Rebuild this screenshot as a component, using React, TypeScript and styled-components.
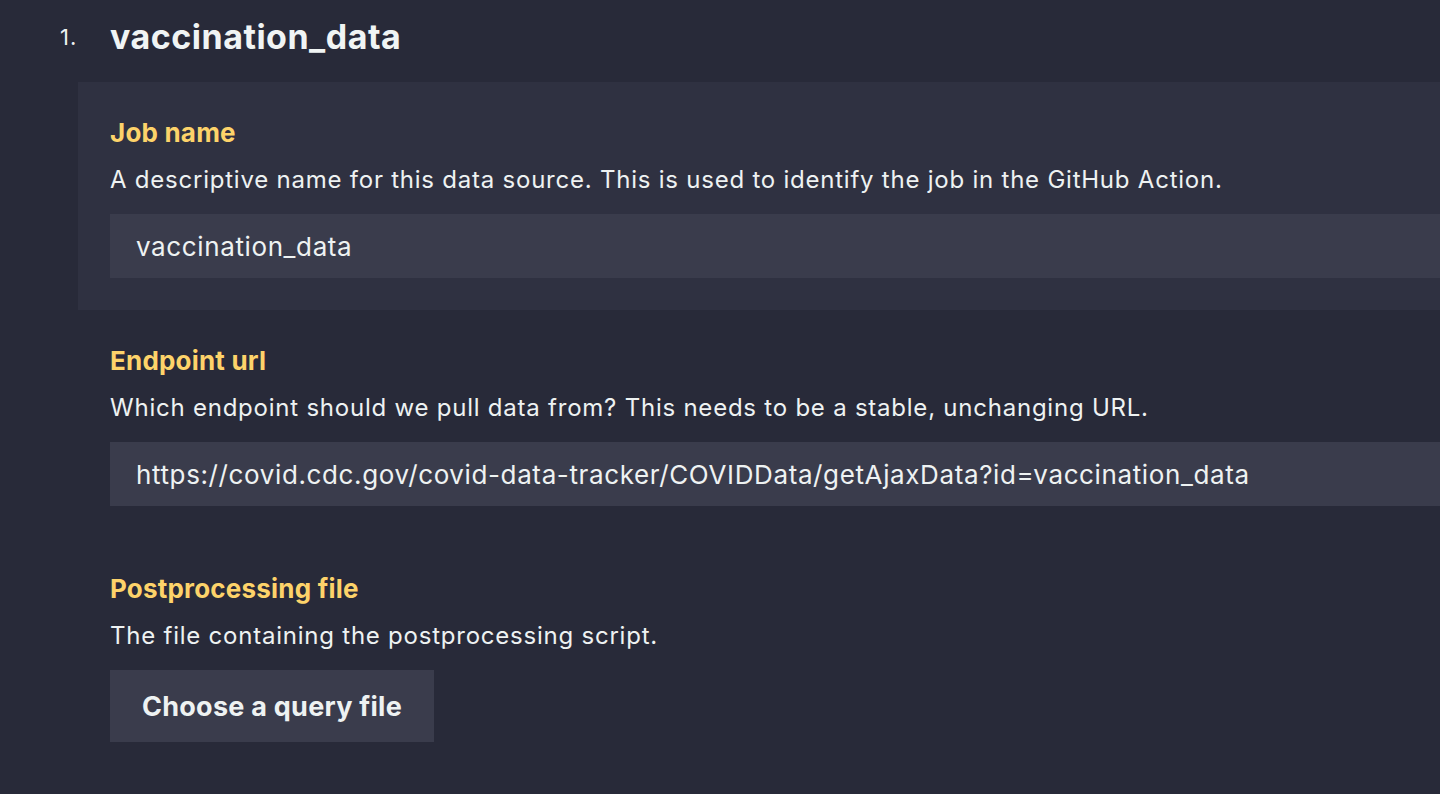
import React from "react";
import styled, { createGlobalStyle } from "styled-components";

const Global = createGlobalStyle`
  html, body {
    margin: 0;
    padding: 0;
    background: #282a39;
    overflow: hidden;
  }
  body {
    font-family: Inter, "Noto Sans", sans-serif;
    color: #eef2f2;
    -webkit-font-smoothing: antialiased;
  }
`;

const Page = styled.div`
  width: 1440px;
  height: 794px;
  overflow: hidden;
  background: #282a39;
`;

const ItemHeader = styled.div`
  display: flex;
  align-items: center;
  height: 50px;
  margin-top: 12px;
  margin-bottom: 20px;
`;

const Index = styled.span`
  width: 50px;
  margin-left: 60px;
  font-size: 22px;
  line-height: 50px;
  letter-spacing: 1px;
  color: #eef2f2;
`;

const Title = styled.h2`
  margin: 0;
  font-size: 34px;
  line-height: 50px;
  font-weight: 700;
  letter-spacing: 0.5px;
  color: #f0f4f4;
`;

const Fields = styled.div`
  margin-left: 78px;
  width: 1500px;
  display: flex;
  flex-direction: column;
`;

const Field = styled.div<{ $active?: boolean }>`
  padding: 32px;
  background: ${(p) => (p.$active ? "#2f3141" : "transparent")};
  display: flex;
  flex-direction: column;
`;

const Label = styled.label`
  font-size: 26px;
  line-height: 38px;
  font-weight: 700;
  letter-spacing: 0.2px;
  color: #fdd36a;
`;

const Description = styled.p`
  margin: 12px 0 0;
  font-size: 24px;
  line-height: 32px;
  letter-spacing: 0.77px;
  color: #eef2f2;
`;

const Input = styled.input`
  margin-top: 18px;
  height: 64px;
  box-sizing: border-box;
  border: none;
  outline: none;
  background: #3a3c4c;
  padding: 0 26px;
  font-family: Inter, "Noto Sans", sans-serif;
  font-size: 26px;
  letter-spacing: 0.62px;
  color: #eef2f2;
`;

const FileButton = styled.button`
  margin-top: 18px;
  align-self: flex-start;
  height: 72px;
  padding: 0 32px;
  border: none;
  background: #3a3c4c;
  font-family: Inter, "Noto Sans", sans-serif;
  font-size: 27px;
  font-weight: 700;
  letter-spacing: 0.25px;
  color: #eef2f2;
  cursor: pointer;
`;

export default function App() {
  return (
    <Page>
      <Global />
      <ItemHeader>
        <Index>1.</Index>
        <Title>vaccination_data</Title>
      </ItemHeader>
      <Fields>
        <Field $active>
          <Label>Job name</Label>
          <Description>
            A descriptive name for this data source. This is used to identify the job in the GitHub Action.
          </Description>
          <Input defaultValue="vaccination_data" />
        </Field>
        <Field>
          <Label>Endpoint url</Label>
          <Description>
            Which endpoint should we pull data from? This needs to be a stable, unchanging URL.
          </Description>
          <Input defaultValue="https://covid.cdc.gov/covid-data-tracker/COVIDData/getAjaxData?id=vaccination_data" />
        </Field>
        <Field>
          <Label>Postprocessing file</Label>
          <Description>The file containing the postprocessing script.</Description>
          <FileButton>Choose a query file</FileButton>
        </Field>
      </Fields>
    </Page>
  );
}
